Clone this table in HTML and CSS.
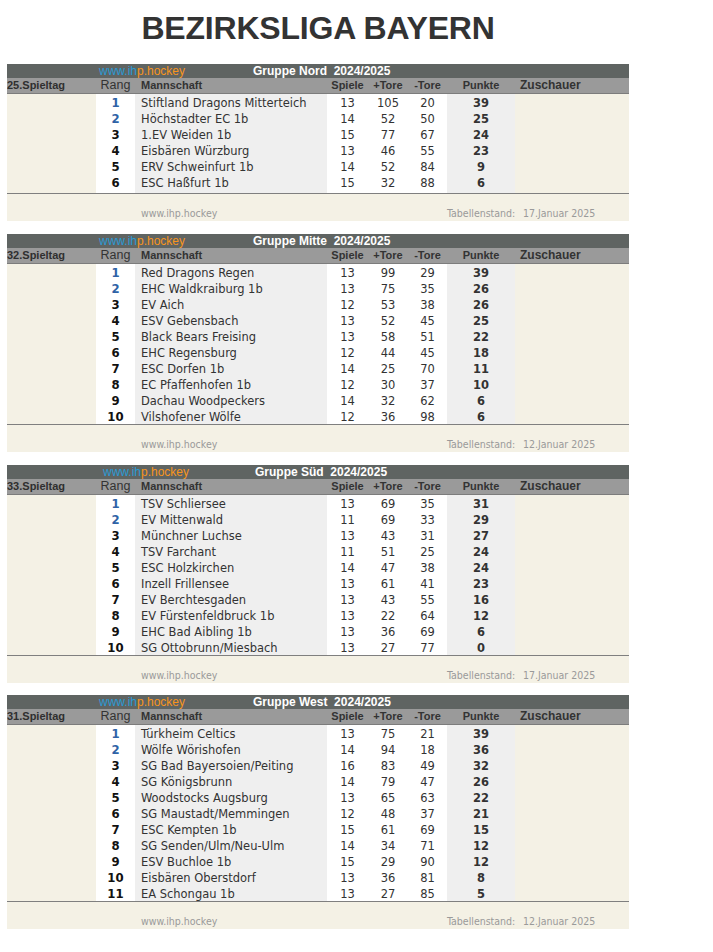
FILE: index.html
```html
<!DOCTYPE html>
<html lang="de">
<head>
<meta charset="utf-8">
<title>Bezirksliga Bayern</title>
<link rel="stylesheet" href="styles.css">
</head>
<body>
<div class="page">
  <h1 class="title">BEZIRKSLIGA BAYERN</h1>

  <table class="standings">
    <colgroup><col class="c-day"><col class="c-rank"><col class="c-team"><col class="c-num"><col class="c-num2"><col class="c-num3"><col class="c-pts"><col class="c-fans"></colgroup>
    <thead>
      <tr><td class="bar" colspan="8"><div class="bar-in"><span class="site"><span class="site-a">www.ih</span><span class="site-b">p.hockey</span></span><span class="group">Gruppe Nord&nbsp; 2024/2025</span></div></td></tr>
      <tr class="head"><th class="h-day">25.Spieltag</th><th class="h-rank">Rang</th><th class="h-team">Mannschaft</th><th>Spiele</th><th>+Tore</th><th>-Tore</th><th>Punkte</th><th class="h-fans">Zuschauer</th></tr>
    </thead>
    <tbody>
      <tr><td class="day"></td><td class="rank top">1</td><td class="team">Stiftland Dragons Mitterteich</td><td class="num">13</td><td class="num">105</td><td class="num">20</td><td class="pts">39</td><td class="fans"></td></tr>
      <tr><td class="day"></td><td class="rank top">2</td><td class="team">Höchstadter EC 1b</td><td class="num">14</td><td class="num">52</td><td class="num">50</td><td class="pts">25</td><td class="fans"></td></tr>
      <tr><td class="day"></td><td class="rank">3</td><td class="team">1.EV Weiden 1b</td><td class="num">15</td><td class="num">77</td><td class="num">67</td><td class="pts">24</td><td class="fans"></td></tr>
      <tr><td class="day"></td><td class="rank">4</td><td class="team">Eisbären Würzburg</td><td class="num">13</td><td class="num">46</td><td class="num">55</td><td class="pts">23</td><td class="fans"></td></tr>
      <tr><td class="day"></td><td class="rank">5</td><td class="team">ERV Schweinfurt 1b</td><td class="num">14</td><td class="num">52</td><td class="num">84</td><td class="pts">9</td><td class="fans"></td></tr>
      <tr><td class="day"></td><td class="rank">6</td><td class="team">ESC Haßfurt 1b</td><td class="num">15</td><td class="num">32</td><td class="num">88</td><td class="pts">6</td><td class="fans"></td></tr>
      <tr class="spacer"><td class="day"></td><td></td><td class="team"></td><td></td><td></td><td></td><td class="pts"></td><td class="fans"></td></tr>
    </tbody>
    <tfoot>
      <tr><td class="foot" colspan="8"><div class="foot-in"><span class="foot-site">www.ihp.hockey</span><span class="foot-label">Tabellenstand:</span><span class="foot-date">17.Januar 2025</span></div></td></tr>
    </tfoot>
  </table>

  <table class="standings">
    <colgroup><col class="c-day"><col class="c-rank"><col class="c-team"><col class="c-num"><col class="c-num2"><col class="c-num3"><col class="c-pts"><col class="c-fans"></colgroup>
    <thead>
      <tr><td class="bar" colspan="8"><div class="bar-in"><span class="site"><span class="site-a">www.ih</span><span class="site-b">p.hockey</span></span><span class="group">Gruppe Mitte&nbsp; 2024/2025</span></div></td></tr>
      <tr class="head"><th class="h-day">32.Spieltag</th><th class="h-rank">Rang</th><th class="h-team">Mannschaft</th><th>Spiele</th><th>+Tore</th><th>-Tore</th><th>Punkte</th><th class="h-fans">Zuschauer</th></tr>
    </thead>
    <tbody>
      <tr><td class="day"></td><td class="rank top">1</td><td class="team">Red Dragons Regen</td><td class="num">13</td><td class="num">99</td><td class="num">29</td><td class="pts">39</td><td class="fans"></td></tr>
      <tr><td class="day"></td><td class="rank top">2</td><td class="team">EHC Waldkraiburg 1b</td><td class="num">13</td><td class="num">75</td><td class="num">35</td><td class="pts">26</td><td class="fans"></td></tr>
      <tr><td class="day"></td><td class="rank">3</td><td class="team">EV Aich</td><td class="num">12</td><td class="num">53</td><td class="num">38</td><td class="pts">26</td><td class="fans"></td></tr>
      <tr><td class="day"></td><td class="rank">4</td><td class="team">ESV Gebensbach</td><td class="num">13</td><td class="num">52</td><td class="num">45</td><td class="pts">25</td><td class="fans"></td></tr>
      <tr><td class="day"></td><td class="rank">5</td><td class="team">Black Bears Freising</td><td class="num">13</td><td class="num">58</td><td class="num">51</td><td class="pts">22</td><td class="fans"></td></tr>
      <tr><td class="day"></td><td class="rank">6</td><td class="team">EHC Regensburg</td><td class="num">12</td><td class="num">44</td><td class="num">45</td><td class="pts">18</td><td class="fans"></td></tr>
      <tr><td class="day"></td><td class="rank">7</td><td class="team">ESC Dorfen 1b</td><td class="num">14</td><td class="num">25</td><td class="num">70</td><td class="pts">11</td><td class="fans"></td></tr>
      <tr><td class="day"></td><td class="rank">8</td><td class="team">EC Pfaffenhofen 1b</td><td class="num">12</td><td class="num">30</td><td class="num">37</td><td class="pts">10</td><td class="fans"></td></tr>
      <tr><td class="day"></td><td class="rank">9</td><td class="team">Dachau Woodpeckers</td><td class="num">14</td><td class="num">32</td><td class="num">62</td><td class="pts">6</td><td class="fans"></td></tr>
      <tr><td class="day"></td><td class="rank">10</td><td class="team">Vilshofener Wölfe</td><td class="num">12</td><td class="num">36</td><td class="num">98</td><td class="pts">6</td><td class="fans"></td></tr>
    </tbody>
    <tfoot>
      <tr><td class="foot" colspan="8"><div class="foot-in"><span class="foot-site">www.ihp.hockey</span><span class="foot-label">Tabellenstand:</span><span class="foot-date">12.Januar 2025</span></div></td></tr>
    </tfoot>
  </table>

  <table class="standings standings--tight">
    <colgroup><col class="c-day"><col class="c-rank"><col class="c-team"><col class="c-num"><col class="c-num2"><col class="c-num3"><col class="c-pts"><col class="c-fans"></colgroup>
    <thead>
      <tr><td class="bar" colspan="8"><div class="bar-in bar-in--sued"><span class="site"><span class="site-a">www.ih</span><span class="site-b">p.hockey</span></span><span class="group">Gruppe Süd&nbsp; 2024/2025</span></div></td></tr>
      <tr class="head"><th class="h-day">33.Spieltag</th><th class="h-rank">Rang</th><th class="h-team">Mannschaft</th><th>Spiele</th><th>+Tore</th><th>-Tore</th><th>Punkte</th><th class="h-fans">Zuschauer</th></tr>
    </thead>
    <tbody>
      <tr><td class="day"></td><td class="rank top">1</td><td class="team">TSV Schliersee</td><td class="num">13</td><td class="num">69</td><td class="num">35</td><td class="pts">31</td><td class="fans"></td></tr>
      <tr><td class="day"></td><td class="rank top">2</td><td class="team">EV Mittenwald</td><td class="num">11</td><td class="num">69</td><td class="num">33</td><td class="pts">29</td><td class="fans"></td></tr>
      <tr><td class="day"></td><td class="rank">3</td><td class="team">Münchner Luchse</td><td class="num">13</td><td class="num">43</td><td class="num">31</td><td class="pts">27</td><td class="fans"></td></tr>
      <tr><td class="day"></td><td class="rank">4</td><td class="team">TSV Farchant</td><td class="num">11</td><td class="num">51</td><td class="num">25</td><td class="pts">24</td><td class="fans"></td></tr>
      <tr><td class="day"></td><td class="rank">5</td><td class="team">ESC Holzkirchen</td><td class="num">14</td><td class="num">47</td><td class="num">38</td><td class="pts">24</td><td class="fans"></td></tr>
      <tr><td class="day"></td><td class="rank">6</td><td class="team">Inzell Frillensee</td><td class="num">13</td><td class="num">61</td><td class="num">41</td><td class="pts">23</td><td class="fans"></td></tr>
      <tr><td class="day"></td><td class="rank">7</td><td class="team">EV Berchtesgaden</td><td class="num">13</td><td class="num">43</td><td class="num">55</td><td class="pts">16</td><td class="fans"></td></tr>
      <tr><td class="day"></td><td class="rank">8</td><td class="team">EV Fürstenfeldbruck 1b</td><td class="num">13</td><td class="num">22</td><td class="num">64</td><td class="pts">12</td><td class="fans"></td></tr>
      <tr><td class="day"></td><td class="rank">9</td><td class="team">EHC Bad Aibling 1b</td><td class="num">13</td><td class="num">36</td><td class="num">69</td><td class="pts">6</td><td class="fans"></td></tr>
      <tr><td class="day"></td><td class="rank">10</td><td class="team">SG Ottobrunn/Miesbach</td><td class="num">13</td><td class="num">27</td><td class="num">77</td><td class="pts">0</td><td class="fans"></td></tr>
    </tbody>
    <tfoot>
      <tr><td class="foot" colspan="8"><div class="foot-in"><span class="foot-site">www.ihp.hockey</span><span class="foot-label">Tabellenstand:</span><span class="foot-date">17.Januar 2025</span></div></td></tr>
    </tfoot>
  </table>

  <table class="standings">
    <colgroup><col class="c-day"><col class="c-rank"><col class="c-team"><col class="c-num"><col class="c-num2"><col class="c-num3"><col class="c-pts"><col class="c-fans"></colgroup>
    <thead>
      <tr><td class="bar" colspan="8"><div class="bar-in"><span class="site"><span class="site-a">www.ih</span><span class="site-b">p.hockey</span></span><span class="group">Gruppe West&nbsp; 2024/2025</span></div></td></tr>
      <tr class="head"><th class="h-day">31.Spieltag</th><th class="h-rank">Rang</th><th class="h-team">Mannschaft</th><th>Spiele</th><th>+Tore</th><th>-Tore</th><th>Punkte</th><th class="h-fans">Zuschauer</th></tr>
    </thead>
    <tbody>
      <tr><td class="day"></td><td class="rank top">1</td><td class="team">Türkheim Celtics</td><td class="num">13</td><td class="num">75</td><td class="num">21</td><td class="pts">39</td><td class="fans"></td></tr>
      <tr><td class="day"></td><td class="rank top">2</td><td class="team">Wölfe Wörishofen</td><td class="num">14</td><td class="num">94</td><td class="num">18</td><td class="pts">36</td><td class="fans"></td></tr>
      <tr><td class="day"></td><td class="rank">3</td><td class="team">SG Bad Bayersoien/Peiting</td><td class="num">16</td><td class="num">83</td><td class="num">49</td><td class="pts">32</td><td class="fans"></td></tr>
      <tr><td class="day"></td><td class="rank">4</td><td class="team">SG Königsbrunn</td><td class="num">14</td><td class="num">79</td><td class="num">47</td><td class="pts">26</td><td class="fans"></td></tr>
      <tr><td class="day"></td><td class="rank">5</td><td class="team">Woodstocks Augsburg</td><td class="num">13</td><td class="num">65</td><td class="num">63</td><td class="pts">22</td><td class="fans"></td></tr>
      <tr><td class="day"></td><td class="rank">6</td><td class="team">SG Maustadt/Memmingen</td><td class="num">12</td><td class="num">48</td><td class="num">37</td><td class="pts">21</td><td class="fans"></td></tr>
      <tr><td class="day"></td><td class="rank">7</td><td class="team">ESC Kempten 1b</td><td class="num">15</td><td class="num">61</td><td class="num">69</td><td class="pts">15</td><td class="fans"></td></tr>
      <tr><td class="day"></td><td class="rank">8</td><td class="team">SG Senden/Ulm/Neu-Ulm</td><td class="num">14</td><td class="num">34</td><td class="num">71</td><td class="pts">12</td><td class="fans"></td></tr>
      <tr><td class="day"></td><td class="rank">9</td><td class="team">ESV Buchloe 1b</td><td class="num">15</td><td class="num">29</td><td class="num">90</td><td class="pts">12</td><td class="fans"></td></tr>
      <tr><td class="day"></td><td class="rank">10</td><td class="team">Eisbären Oberstdorf</td><td class="num">13</td><td class="num">36</td><td class="num">81</td><td class="pts">8</td><td class="fans"></td></tr>
      <tr><td class="day"></td><td class="rank">11</td><td class="team">EA Schongau 1b</td><td class="num">13</td><td class="num">27</td><td class="num">85</td><td class="pts">5</td><td class="fans"></td></tr>
    </tbody>
    <tfoot>
      <tr><td class="foot" colspan="8"><div class="foot-in"><span class="foot-site">www.ihp.hockey</span><span class="foot-label">Tabellenstand:</span><span class="foot-date">12.Januar 2025</span></div></td></tr>
    </tfoot>
  </table>
</div>
</body>
</html>
```

FILE: styles.css
```css
html, body {
  margin: 0;
  padding: 0;
  background: #ffffff;
}

.page {
  padding-left: 7px;
  width: 622px;
}

.title {
  margin: 0;
  padding: 10px 0 17px;
  font: bold 32px/37px "Liberation Sans", Arial, sans-serif;
  color: #333333;
  text-align: center;
  letter-spacing: -0.2px;
}

.standings {
  width: 622px;
  table-layout: fixed;
  border-collapse: collapse;
  border-spacing: 0;
  margin-bottom: 13px;
}

.standings--tight {
  margin-bottom: 12px;
}

.c-day { width: 89px; }
.c-rank { width: 39px; }
.c-team { width: 192px; }
.c-num { width: 41px; }
.c-num2 { width: 40px; }
.c-num3 { width: 39px; }
.c-pts { width: 68px; }
.c-fans { width: 114px; }

.standings td,
.standings th {
  padding: 0;
}

/* dark title bar */
.bar {
  background: #5f6462;
  height: 14px;
}

.bar-in {
  display: flex;
  align-items: center;
  height: 14px;
  white-space: nowrap;
}

.site {
  margin-left: 92px;
  width: 154px;
  font: 12px/14px "Liberation Sans", Arial, sans-serif;
}

.bar-in--sued .site {
  margin-left: 96px;
  width: 152px;
}

.site-a { color: #2a9ad4; }
.site-b { color: #f7941d; }

.group {
  font: bold 12px/14px "Liberation Sans", Arial, sans-serif;
  color: #ffffff;
}

/* grey header row */
.head th {
  background: #9a9a9a;
  height: 15px;
  line-height: 15px;
  border-bottom: 1px solid #7c7c7c;
  font: bold 11px/15px "Liberation Sans", Arial, sans-serif;
  color: #333333;
  text-align: center;
  white-space: nowrap;
  overflow: hidden;
}

.head .h-day {
  text-align: left;
  color: #2f2f2f;
}

.head .h-rank {
  font-weight: normal;
  font-size: 12.5px;
}

.head .h-team {
  text-align: left;
  padding-left: 6px;
}

.head .h-fans {
  text-align: left;
  padding-left: 5px;
  font-size: 12px;
}

/* body rows */
.standings tbody td {
  height: 15px;
  padding-top: 1px;
  font: 12.75px/15px "DejaVu Sans Condensed", "DejaVu Sans", sans-serif;
  font-stretch: condensed;
  color: #333333;
  background: #ffffff;
  white-space: nowrap;
}

.standings tbody td.day,
.standings tbody td.fans {
  background: #f4f1e5;
}

.standings tbody td.team {
  background: #efefef;
  padding-left: 6px;
}

.standings tbody td.pts {
  background: #efefef;
  text-align: center;
  font-weight: bold;
}

.standings tbody td.num {
  text-align: center;
}

.standings tbody td.rank {
  text-align: center;
  font-weight: bold;
  font-size: 13px;
  color: #111111;
}

.standings tbody td.rank.top {
  color: #2e62a6;
}

.standings tbody tr.spacer td {
  height: 3px;
  padding-top: 0;
  line-height: 3px;
  font-size: 1px;
}

/* footer */
.foot {
  background: #f4f1e5;
  border-top: 1px solid #7f7f7f;
  height: 27px;
}

.foot-in {
  display: flex;
  align-items: flex-end;
  height: 27px;
  padding-bottom: 1px;
  box-sizing: border-box;
  font: 10.5px/14px "DejaVu Sans Condensed", "DejaVu Sans", sans-serif;
  font-stretch: condensed;
  color: #9a9a9a;
  white-space: nowrap;
}

.foot-site {
  margin-left: 134px;
  width: 306px;
}

.foot-label {
  width: 76px;
}
```
